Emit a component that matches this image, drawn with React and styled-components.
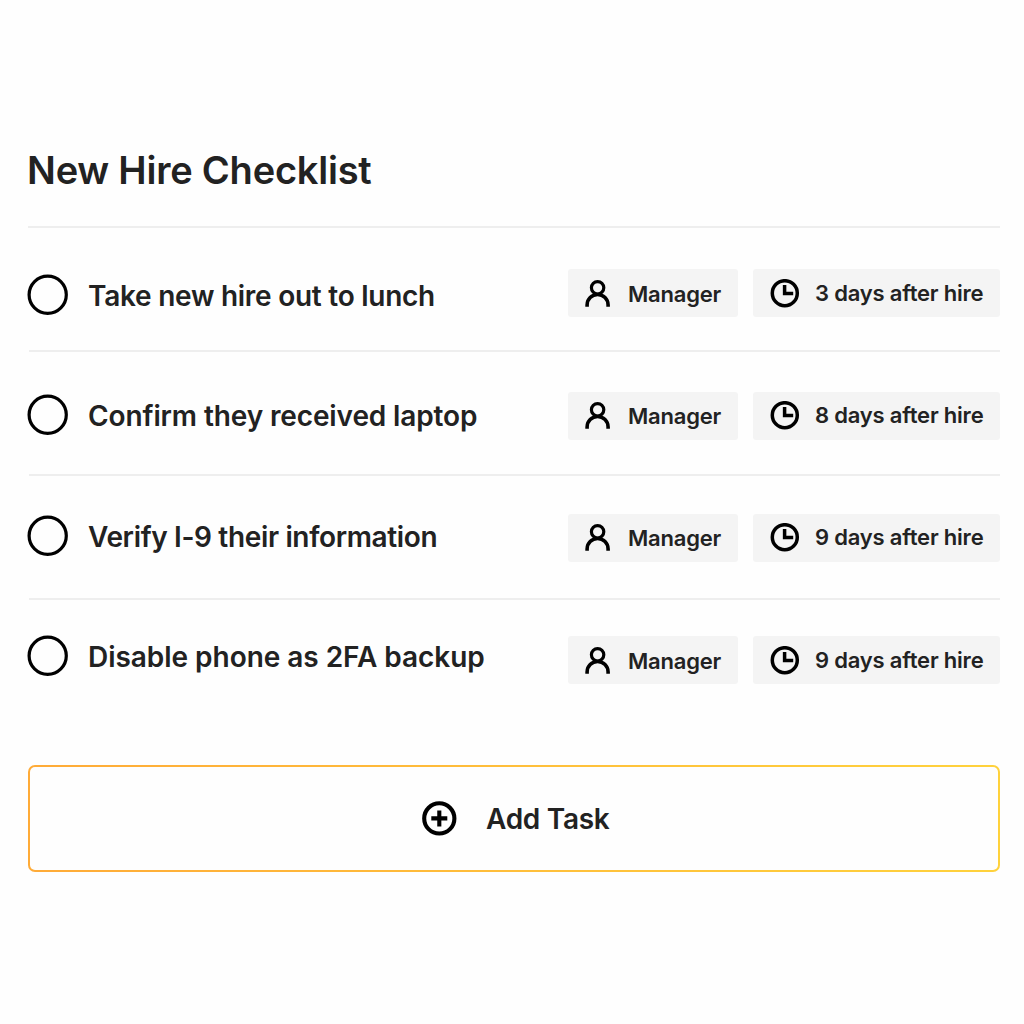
import React, { useState } from "react";

import styled, { createGlobalStyle } from "styled-components";

const GlobalStyle = createGlobalStyle`
  body {
    margin: 0;
    background: #fefefe;
  }
`;

const Page = styled.main`
  box-sizing: border-box;
  width: 1024px;
  height: 1024px;
  padding: 145px 24px 0 28px;
  color: #222222;
  font-family: "Inter", sans-serif;
  font-weight: 600;
`;

const H1 = styled.h1`
  height: 81px;
  margin: 0 0 0 -1px;
  font-size: 38px;
  font-weight: 600;
  line-height: 50px;
  letter-spacing: -0.22px;
  white-space: nowrap;
`;

const TaskList = styled.ul`
  margin: 0;
  padding: 0;
  list-style: none;
`;

const Item = styled.li`
  height: 124px;
`;

const Divider = styled.div`
  height: 2px;
  margin-left: ${(props) => (props.$first ? 0 : 1)}px;
  background: #eeeeee;
`;

const Row = styled.div`
  display: flex;
  align-items: flex-start;
`;

const Task = styled.div`
  display: flex;
  flex: 1;
  align-items: center;
  gap: 20px;
  padding-top: ${(props) => props.$top}px;
`;

const Check = styled.button`
  box-sizing: border-box;
  flex: none;
  width: 41px;
  height: 41px;
  margin: 0 0 0 -1px;
  padding: 0;
  border: none;
  background: transparent;
`;

const Name = styled.span`
  padding-top: 2px;
  font-size: 28px;
  line-height: 36px;
  letter-spacing: ${(props) => props.$spacing}px;
  white-space: nowrap;
`;

const Tags = styled.div`
  display: flex;
  gap: 15px;
  padding-top: ${(props) => props.$top}px;
`;

const Tag = styled.div`
  display: flex;
  align-items: center;
  box-sizing: border-box;
  width: ${(props) => props.$width}px;
  height: 48px;
  padding-top: ${(props) => props.$drop}px;
  padding-left: 17px;
  gap: ${(props) => props.$gap}px;
  border-radius: 3px;
  background: #f4f4f4;
`;

const Label = styled.span`
  padding-bottom: ${(props) => props.$lift || 0}px;
  font-size: 22px;
  line-height: 28px;
  letter-spacing: -0.2px;
  white-space: nowrap;
`;

const AddTask = styled.button`
  display: flex;
  align-items: center;
  box-sizing: border-box;
  width: 972px;
  height: 107px;
  margin: 43px 0 0;
  padding: 0 0 0 391px;
  gap: 29px;
  border: 2px solid transparent;
  border-radius: 7px;
  background: linear-gradient(#fefefe, #fefefe) padding-box,
    linear-gradient(90deg, #ffab38, #ffd23c) border-box;
  color: inherit;
  font: inherit;
  font-size: 28px;
  letter-spacing: -0.3px;
`;

const Icon = styled.svg`
  display: block;
  flex: none;
  fill: none;
  stroke: #000000;
`;

const tasks = [
  { name: "Take new hire out to lunch", days: 3, top: 46, tagTop: 41, drop: 2, spacing: -0.26 },
  { name: "Confirm they received laptop", days: 8, top: 42.4, tagTop: 40, drop: 0, spacing: -0.12 },
  { name: "Verify I-9 their information", days: 9, top: 39, tagTop: 38, drop: 0, spacing: -0.35 },
  { name: "Disable phone as 2FA backup", days: 9, top: 35.4, tagTop: 36, drop: 1.4, spacing: -0.04 },
];

function CheckIcon({ done }) {
  return (
    <Icon width="41" height="41" viewBox="0 0 41 41" strokeWidth="3.2">
      <circle cx="20.7" cy="20.7" r="18.6" />
      {done && <path d="M12 21l6 6 11-12" />}
    </Icon>
  );
}

function PersonIcon() {
  return (
    <Icon width="26" height="28" viewBox="0 0 26 28" strokeWidth="3.2">
      <circle cx="12.6" cy="7.8" r="6.2" />
      <path d="M2.1 26.7V25a10.5 10.5 0 0 1 21 0v1.7" strokeWidth="3.6" />
    </Icon>
  );
}

function ClockIcon() {
  return (
    <Icon width="30" height="30" viewBox="0 0 30 30" strokeWidth="3.5">
      <circle cx="14.8" cy="14.2" r="12.5" />
      <path d="M14.6 6v8.6h8.6" />
    </Icon>
  );
}

function PlusIcon() {
  return (
    <Icon width="36" height="36" viewBox="0 0 36 36" strokeWidth="4.1">
      <circle cx="18.3" cy="17.4" r="15.1" />
      <path d="M18.3 9.4v16M10.3 17.4h16" />
    </Icon>
  );
}

function App() {
  const [done, setDone] = useState({});

  const toggle = (name) => {
    setDone({ ...done, [name]: !done[name] });
  };

  return (
    <Page>
      <GlobalStyle />
      <H1>New Hire Checklist</H1>
      <TaskList>
        {tasks.map((item, index) => {
          return (
            <Item key={item.name}>
              <Divider $first={index === 0} />
              <Row>
                <Task $top={item.top}>
                  <Check onClick={() => toggle(item.name)}>
                    <CheckIcon done={done[item.name]} />
                  </Check>
                  <Name $spacing={item.spacing}>{item.name}</Name>
                </Task>
                <Tags $top={item.tagTop}>
                  <Tag $width={170} $gap={17} $drop={item.drop}>
                    <PersonIcon />
                    <Label>Manager</Label>
                  </Tag>
                  <Tag $width={247} $gap={15} $drop={item.drop}>
                    <ClockIcon />
                    <Label $lift={2}>{item.days} days after hire</Label>
                  </Tag>
                </Tags>
              </Row>
            </Item>
          );
        })}
      </TaskList>
      <AddTask>
        <PlusIcon />
        Add Task
      </AddTask>
    </Page>
  );
}

export default App;
